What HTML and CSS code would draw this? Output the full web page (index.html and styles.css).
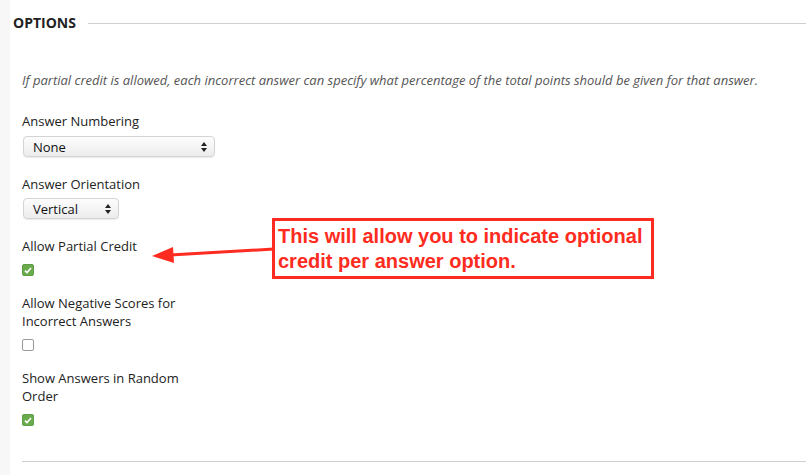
FILE: index.html
```html
<!DOCTYPE html>
<html lang="en">
  <head>
    <meta charset="UTF-8" />
    <title>Question Options</title>
    <link rel="stylesheet" href="styles.css">
  </head>

  <body>
    <div class="panel">
      <!-- Section heading -->
      <div class="section-head">
        <h2>OPTIONS</h2>
        <span class="rule"></span>
      </div>

      <div class="section-body">
        <p class="hint">If partial credit is allowed, each incorrect answer can specify what percentage of the total points should be given for that answer.</p>

        <div class="field">
          <label>Answer Numbering</label>
          <div class="select select-wide">
            <span>None</span>
            <svg width="6" height="10" viewBox="0 0 6 10"><path d="M3 0 L6 4 H0 Z M0 6 H6 L3 10 Z" fill="#222"/></svg>
          </div>
        </div>

        <div class="field">
          <label>Answer Orientation</label>
          <div class="select select-narrow">
            <span>Vertical</span>
            <svg width="6" height="10" viewBox="0 0 6 10"><path d="M3 0 L6 4 H0 Z M0 6 H6 L3 10 Z" fill="#222"/></svg>
          </div>
        </div>

        <div class="field">
          <label>Allow Partial Credit</label>
          <span class="check checked">
            <svg width="8" height="7" viewBox="0 0 8 7"><path d="M1 3.6 L3 5.6 L7 1" fill="none" stroke="#fff" stroke-width="1.6"/></svg>
          </span>
        </div>

        <div class="field">
          <label>Allow Negative Scores for Incorrect Answers</label>
          <span class="check"></span>
        </div>

        <div class="field">
          <label>Show Answers in Random Order</label>
          <span class="check checked">
            <svg width="8" height="7" viewBox="0 0 8 7"><path d="M1 3.6 L3 5.6 L7 1" fill="none" stroke="#fff" stroke-width="1.6"/></svg>
          </span>
        </div>

        <hr class="bottom-rule" />
      </div>

      <!-- Callout added on the screenshot -->
      <svg class="callout-arrow" width="124" height="20" viewBox="0 0 124 20">
        <path d="M122 4 L18 10" stroke="#fe2b20" stroke-width="3" fill="none"/>
        <path d="M0 11 L21 2 L22 18 Z" fill="#fe2b20"/>
      </svg>
      <div class="callout">This will allow you to indicate optional credit per answer option.</div>
    </div>
  </body>
</html>
```

FILE: styles.css
```css
body {
  margin: 0;
  background-color: #f7f7f7;
  font-family: "Open Sans", Arial, sans-serif;
  color: #222;
}

.panel {
  position: relative;
  margin-left: 10px;
  min-height: 475px;
  background-color: #fff;
  padding-top: 14px;
  box-sizing: border-box;
}

.section-head {
  display: flex;
  align-items: center;
  gap: 12px;
  padding-left: 3px;
}

.section-head h2 {
  margin: 0;
  font-size: 14px;
  line-height: 18px;
  font-weight: 700;
  color: #222;
}

.section-head .rule {
  flex: 1;
  height: 1px;
  background-color: #cfcfcf;
  margin-top: 1px;
}

.section-body {
  padding-left: 12px;
}

.hint {
  margin: 39px 0 23px;
  font-size: 13px;
  line-height: 18px;
  font-style: italic;
  color: #555;
}

.field {
  display: flex;
  flex-direction: column;
  align-items: flex-start;
  margin-bottom: 18px;
}

.field label {
  display: block;
  width: 170px;
  font-size: 13px;
  line-height: 18px;
  color: #222;
}

/* Select boxes */
.select {
  display: flex;
  align-items: center;
  justify-content: space-between;
  box-sizing: border-box;
  height: 21px;
  margin-top: 6px;
  margin-left: 1px;
  padding: 0 7px 0 9px;
  border: 1px solid #d4d4d4;
  border-radius: 4px;
  background: linear-gradient(#fdfdfd, #ececec);
  box-shadow: 0 1px 1px rgba(0, 0, 0, 0.08);
  font-size: 13px;
  color: #111;
}

.select-wide {
  width: 192px;
}

.select-narrow {
  width: 96px;
  margin-top: 5px;
}

/* Checkboxes */
.check {
  display: flex;
  align-items: center;
  justify-content: center;
  box-sizing: border-box;
  width: 12px;
  height: 12px;
  margin-top: 9px;
  border: 1px solid #9a9a9a;
  border-radius: 2px;
  background-color: #fff;
}

.check.checked {
  border-color: #5f9e45;
  background-color: #6aab4d;
}

.bottom-rule {
  margin: 35px 0 0;
  border: 0;
  border-top: 1px solid #cfcfcf;
}

/* Red callout */
.callout {
  position: absolute;
  left: 262px;
  top: 218px;
  width: 382px;
  height: 61px;
  box-sizing: border-box;
  border: 3px solid #fe2b20;
  padding: 3px 0 0 3px;
  font-family: "Liberation Sans", Arial, sans-serif;
  font-size: 20px;
  line-height: 25px;
  font-weight: 700;
  color: #fe2b20;
}

.callout-arrow {
  position: absolute;
  left: 142px;
  top: 245px;
}
```
